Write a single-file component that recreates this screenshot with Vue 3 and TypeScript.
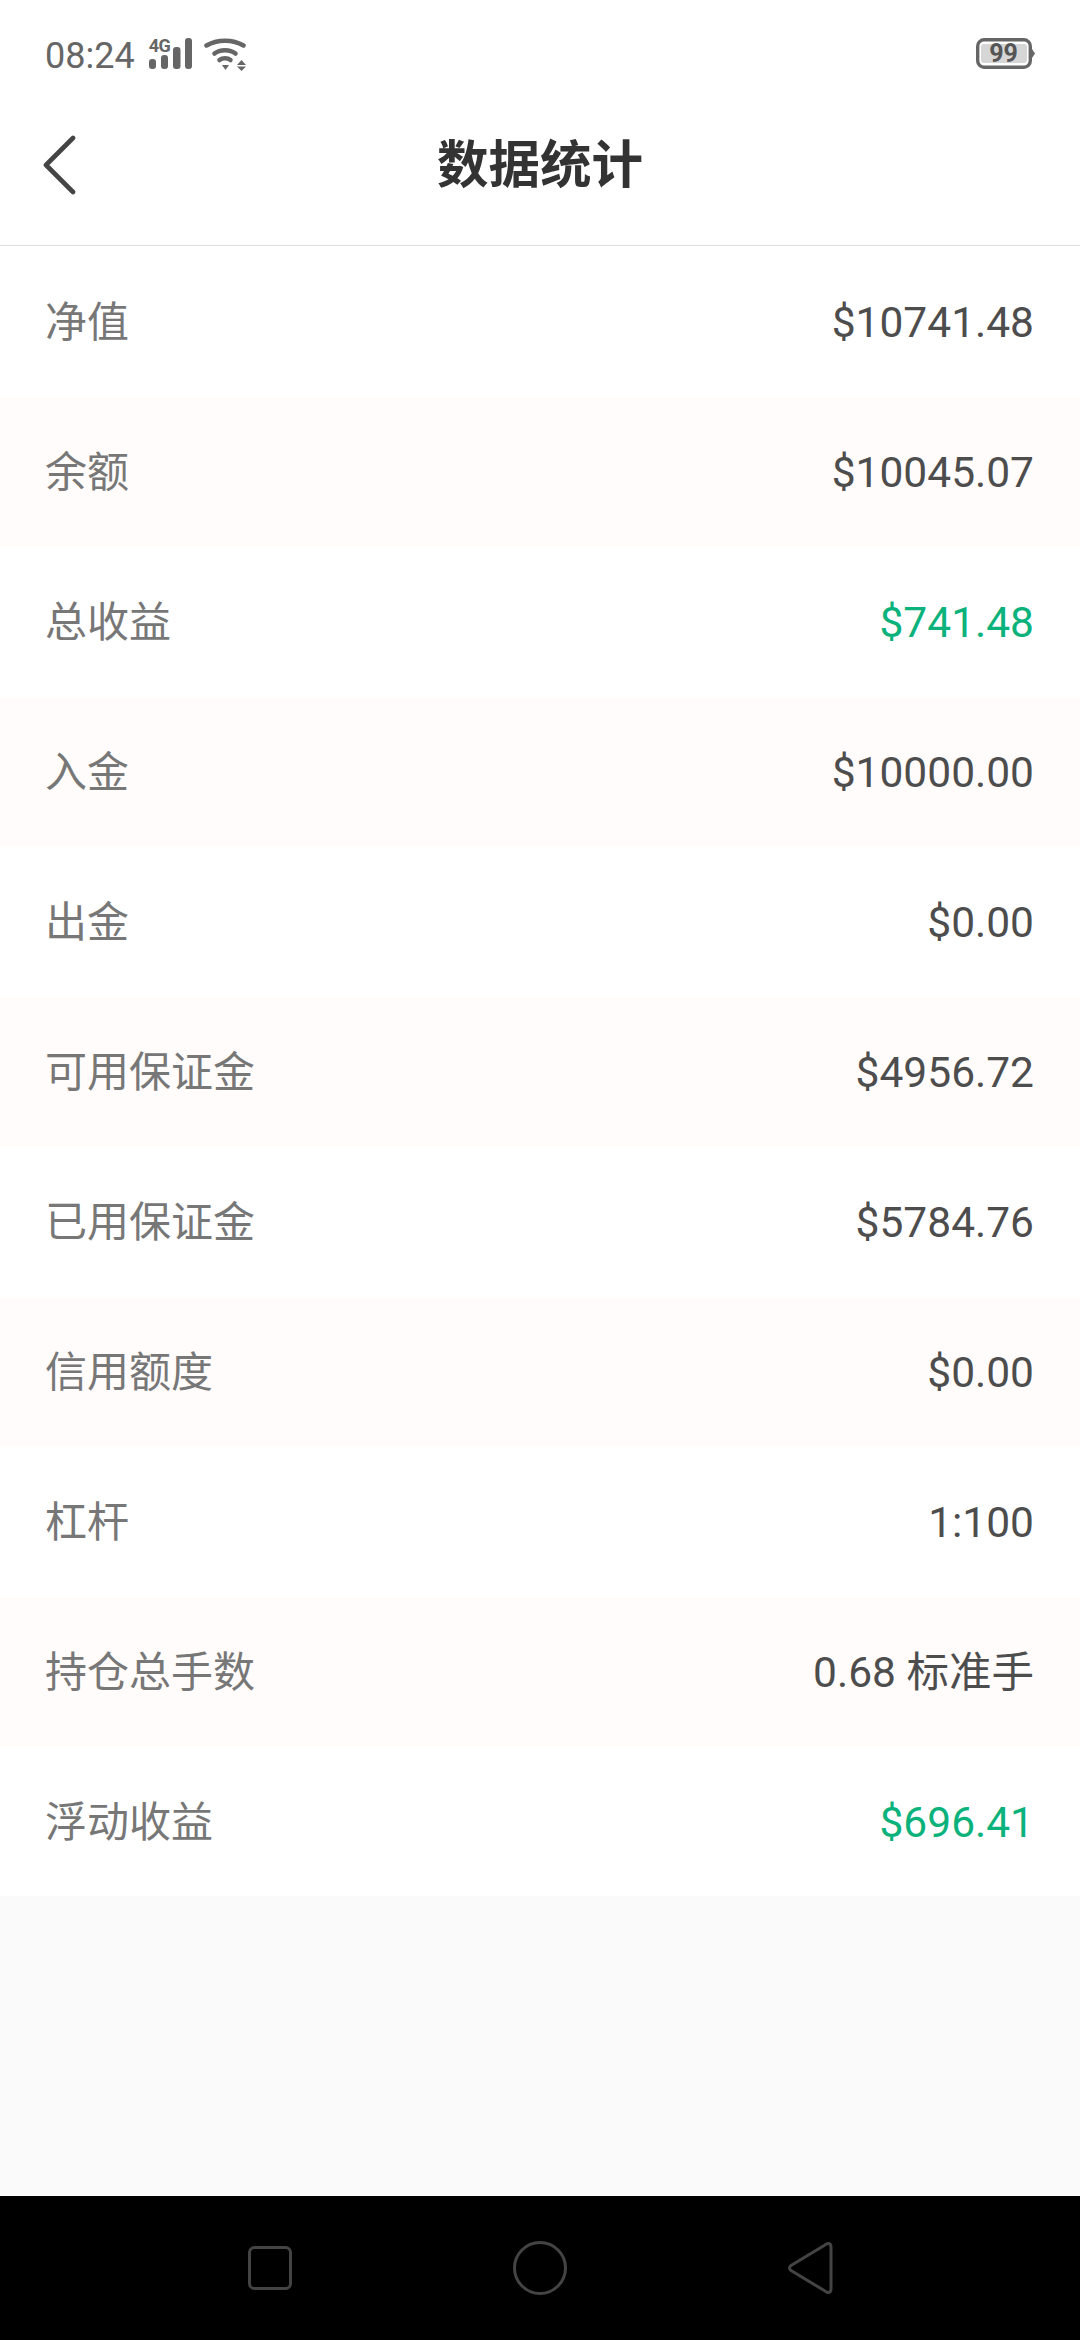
<script setup lang="ts">
interface Row {
  label: string
  value: string
  up?: boolean
}

const rows: Row[] = [
  { label: '净值', value: '$10741.48' },
  { label: '余额', value: '$10045.07' },
  { label: '总收益', value: '$741.48', up: true },
  { label: '入金', value: '$10000.00' },
  { label: '出金', value: '$0.00' },
  { label: '可用保证金', value: '$4956.72' },
  { label: '已用保证金', value: '$5784.76' },
  { label: '信用额度', value: '$0.00' },
  { label: '杠杆', value: '1:100' },
  { label: '持仓总手数', value: '0.68 标准手' },
  { label: '浮动收益', value: '$696.41', up: true },
]
</script>

<template>
  <div class="page">
    <header class="status">
      <div class="status-left">
        <span class="time">08:24</span>
        <span class="signal">
          <span class="net">4G</span>
          <svg class="bars" width="44" height="32" viewBox="0 0 44 32">
            <rect x="0" y="21" width="7" height="10" rx="3" fill="#666" />
            <rect x="12" y="17" width="7" height="14" rx="3" fill="#666" />
            <rect x="24" y="9" width="7.500" height="22" rx="3" fill="#666" />
            <rect x="36" y="0" width="7" height="31" rx="3" fill="#666" />
          </svg>
        </span>
        <svg class="wifi" width="44" height="34" viewBox="0 0 44 34" fill="none">
          <path d="M2.500 7.500 C13 1 29 1 39.500 7.500" stroke="#666" stroke-width="4.500" stroke-linecap="round" />
          <path d="M10.500 15.500 C16 11 26 11 31.500 15.500" stroke="#666" stroke-width="4.500" stroke-linecap="round" />
          <path d="M15.500 22 C18.500 19.500 23.500 19.500 26.500 22" stroke="#666" stroke-width="4.500" stroke-linecap="round" />
          <path d="M18 27 H25 L21.500 32 Z" fill="#666" />
          <path d="M37.500 22 L42 27 H33 Z M33 28.500 H42 L37.500 33 Z" fill="#666" />
        </svg>
      </div>
      <div class="battery">
        <svg width="60" height="33" viewBox="0 0 60 33" fill="none">
          <rect x="2.700" y="1.700" width="52.600" height="27.600" rx="6.500" stroke="#666" stroke-width="3.400" />
          <rect x="6" y="6" width="46" height="19" rx="3" fill="#d6d6d6" />
          <path d="M57 11 L60 15.500 L57 20 Z" fill="#666" />
        </svg>
        <span class="battery-text">99</span>
      </div>
    </header>

    <nav class="nav">
      <svg class="back" width="36" height="62" viewBox="0 0 36 62" fill="none">
        <path d="M30 3 L3 30 L30 57" stroke="#444" stroke-width="4.600" stroke-linecap="round" stroke-linejoin="round" />
      </svg>
      <h1 class="title">数据统计</h1>
    </nav>

    <main class="list">
      <div v-for="row in rows" :key="row.label" class="row">
        <span class="label">{{ row.label }}</span>
        <span class="value" :class="{ up: row.up }">{{ row.value }}</span>
      </div>
    </main>

    <div class="spacer"></div>

    <footer class="softkeys">
      <svg width="44" height="44" viewBox="0 0 44 44" fill="none">
        <rect x="1.500" y="1.500" width="41" height="41" rx="5" stroke="#444" stroke-width="3" />
      </svg>
      <svg width="54" height="54" viewBox="0 0 54 54" fill="none">
        <circle cx="27" cy="27" r="25.500" stroke="#444" stroke-width="3" />
      </svg>
      <svg width="46" height="54" viewBox="0 0 46 54" fill="none">
        <path d="M41 2.500 C43 2.500 44 4 44 6 V48 C44 50 43 51.500 41 51.500 C40 51.500 39 51 38 50 L4 29.500 C2 28 2 26 4 24.500 L38 4 C39 3 40 2.500 41 2.500 Z" stroke="#444" stroke-width="3" stroke-linejoin="round" />
      </svg>
    </footer>
  </div>
</template>

<style scoped>
.page {
  width: 1080px;
  height: 2340px;
  display: flex;
  flex-direction: column;
  background: #fafafa;
  font-family: Roboto, "Noto Sans CJK SC", sans-serif;
}

.status {
  height: 80px;
  flex: none;
  box-sizing: border-box;
  padding: 30px 45px 0 45px;
  background: #fff;
  display: flex;
  justify-content: space-between;
  align-items: flex-start;
}

.status-left {
  display: flex;
  align-items: flex-start;
}

.time {
  font-size: 36px;
  line-height: 50px;
  margin-top: 1px;
  color: #666;
}

.signal {
  position: relative;
  width: 44px;
  height: 32px;
  margin: 8px 0 0 14px;
}

.net {
  position: absolute;
  left: 0;
  top: 0;
  font-size: 18px;
  line-height: 15px;
  font-weight: 700;
  color: #666;
  letter-spacing: -0.5px;
}

.bars {
  display: block;
}

.wifi {
  margin: 8px 0 0 11px;
}

.battery {
  position: relative;
  width: 60px;
  height: 33px;
  margin-top: 8px;
}

.battery svg {
  display: block;
}

.battery-text {
  position: absolute;
  left: 2px;
  top: 2px;
  width: 53px;
  text-align: center;
  font-size: 25px;
  line-height: 27px;
  font-weight: 700;
  color: #555;
}

.nav {
  position: relative;
  height: 166px;
  flex: none;
  box-sizing: border-box;
  padding-top: 7px;
  background: #fff;
  border-bottom: 1px solid #e0e0e0;
  display: flex;
  align-items: center;
  justify-content: center;
}

.back {
  position: absolute;
  left: 43px;
  top: 55px;
}

.title {
  margin: 0;
  font-size: 51.500px;
  line-height: 70px;
  font-weight: 700;
  color: #333;
}

.list {
  flex: none;
  display: flex;
  flex-direction: column;
  padding-top: 1px;
  background: #fff;
}

.row {
  height: 150px;
  box-sizing: border-box;
  padding: 0 46px 0 45px;
  display: flex;
  justify-content: space-between;
  align-items: center;
}

.row:nth-child(even) {
  background: #fffcfb;
}

.row:last-child {
  height: 149px;
}

.label {
  font-size: 42px;
  line-height: 60px;
  padding-top: 2px;
  color: #777;
}

.value {
  font-size: 42.500px;
  line-height: 60px;
  padding-top: 2px;
  color: #4d4d4d;
}

.value.up {
  color: #0cb27b;
}

.spacer {
  flex: 1;
}

.softkeys {
  height: 144px;
  flex: none;
  background: #000;
  display: grid;
  grid-template-columns: 44px 54px 46px;
  justify-content: space-between;
  align-items: center;
  box-sizing: border-box;
  padding: 0 247px 0 248px;
}
</style>
